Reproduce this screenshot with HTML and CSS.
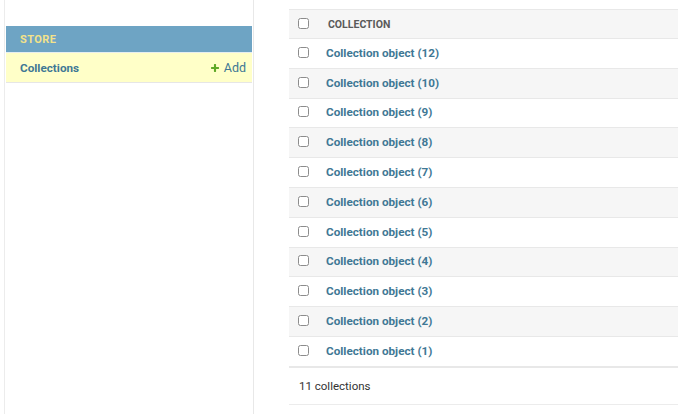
FILE: index.html
```html
<!DOCTYPE html>
<html lang="en">
<head>
<meta charset="utf-8">
<title>Select collection to change</title>
<link rel="stylesheet" href="styles.css">
</head>
<body>
<div class="page">
  <nav class="sidebar">
    <div class="sidebar-inner">
      <div class="module">
        <div class="caption">Store</div>
        <div class="model-row">
          <a class="model-link" href="#">Collections</a>
          <a class="addlink" href="#"><svg class="plus" width="10" height="10" viewBox="0 0 1792 1792"><path fill="#5fa927" d="M1600 796v192q0 40-28 68t-68 28h-416v416q0 40-28 68t-68 28h-192q-40 0-68-28t-28-68v-416h-416q-40 0-68-28t-28-68v-192q0-40 28-68t68-28h416v-416q0-40 28-68t68-28h192q40 0 68 28t28 68v416h416q40 0 68 28t28 68z"/></svg>Add</a>
        </div>
      </div>
    </div>
  </nav>
  <main class="content">
    <div class="results">
      <div class="row head">
        <span class="cb"><input type="checkbox"></span>
        <span class="col-title">Collection</span>
      </div>
      <div class="row"><span class="cb"><input type="checkbox"></span><a class="obj" href="#">Collection object (12)</a></div>
      <div class="row alt"><span class="cb"><input type="checkbox"></span><a class="obj" href="#">Collection object (10)</a></div>
      <div class="row"><span class="cb"><input type="checkbox"></span><a class="obj" href="#">Collection object (9)</a></div>
      <div class="row alt"><span class="cb"><input type="checkbox"></span><a class="obj" href="#">Collection object (8)</a></div>
      <div class="row"><span class="cb"><input type="checkbox"></span><a class="obj" href="#">Collection object (7)</a></div>
      <div class="row alt"><span class="cb"><input type="checkbox"></span><a class="obj" href="#">Collection object (6)</a></div>
      <div class="row"><span class="cb"><input type="checkbox"></span><a class="obj" href="#">Collection object (5)</a></div>
      <div class="row alt"><span class="cb"><input type="checkbox"></span><a class="obj" href="#">Collection object (4)</a></div>
      <div class="row"><span class="cb"><input type="checkbox"></span><a class="obj" href="#">Collection object (3)</a></div>
      <div class="row alt"><span class="cb"><input type="checkbox"></span><a class="obj" href="#">Collection object (2)</a></div>
      <div class="row"><span class="cb"><input type="checkbox"></span><a class="obj" href="#">Collection object (1)</a></div>
    </div>
    <p class="paginator">11 collections</p>
  </main>
</div>
</body>
</html>
```
FILE: styles.css
```css
html, body {
  margin: 0;
  padding: 0;
  background: #fff;
}
body {
  font-family: Roboto, "Liberation Sans", Arial, sans-serif;
  font-size: 13px;
  color: #333;
}
a { text-decoration: none; }

.page {
  display: flex;
  min-height: 414px;
}

.sidebar {
  flex: none;
  border-right: 1px solid #e8e8e8;
  box-sizing: border-box;
  width: 254px;
  padding-left: 4px;
}
.sidebar-inner {
  border-left: 1px solid #ececec;
  height: 100%;
  padding-top: 26px;
  padding-left: 1px;
  padding-right: 1px;
  box-sizing: border-box;
}

.module {
  border-bottom: 1px solid #e6e6e6;
}
.caption {
  height: 26px;
  background: #6ea4c4;
  color: #f3e28a;
  font-size: 11px;
  font-weight: 700;
  letter-spacing: 0.4px;
  text-transform: uppercase;
  display: flex;
  align-items: center;
  padding: 0 14px;
  padding-top: 1px;
  box-sizing: border-box;
}
.model-row {
  height: 29px;
  background: #ffffc8;
  display: flex;
  align-items: center;
  justify-content: space-between;
  padding: 0 6px 0 14px;
  border-top: 1px solid #e6eef0;
}
.model-link {
  color: #3f7895;
  font-weight: 700;
  font-size: 11.7px;
}
.addlink {
  color: #3f7895;
  font-size: 12.5px;
  display: flex;
  align-items: center;
}
.plus {
  margin-right: 4px;
}

.content {
  flex: 1;
  padding: 9px 0 0 35px;
  min-width: 0;
}
.results {
  border-top: 1px solid #e8e8e8;
}
.row {
  display: flex;
  align-items: center;
  height: 28.8px;
  border-bottom: 1px solid #e8e8e8;
  background: #fff;
}
.row.head {
  height: 28px;
  background: #f6f6f6;
}
.row.alt {
  background: #f6f6f6;
}
.cb {
  width: 37px;
  padding-left: 9px;
  box-sizing: border-box;
  display: flex;
  align-items: center;
  flex: none;
}
.cb input {
  appearance: none;
  -webkit-appearance: none;
  width: 11px;
  height: 11px;
  margin: 0 0 2px 0;
  border: 1px solid #8c8c8c;
  border-radius: 2.5px;
  background: #fff;
  box-sizing: border-box;
}
.col-title {
  color: #5a5a5a;
  font-size: 10.5px;
  font-weight: 700;
  text-transform: uppercase;
  padding-left: 2px;
}
.obj {
  color: #3f7895;
  font-weight: 700;
  font-size: 11.7px;
  padding-bottom: 1px;
}

.paginator {
  margin: 0;
  border-top: 1px solid #e8e8e8;
  border-bottom: 1px solid #ececec;
  height: 38px;
  box-sizing: border-box;
  display: flex;
  align-items: center;
  padding: 1px 0 0 10px;
  font-size: 11.5px;
  color: #333;
}
```
